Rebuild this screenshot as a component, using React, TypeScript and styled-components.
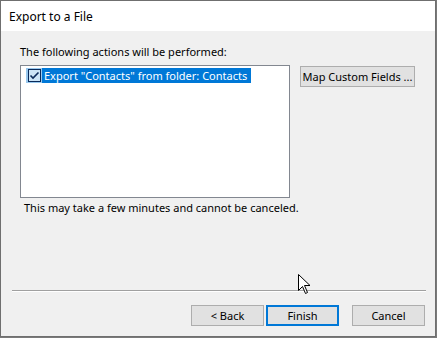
import React from 'react';
import styled, { createGlobalStyle } from 'styled-components';

const GlobalStyle = createGlobalStyle`
  html, body {
    margin: 0;
    padding: 0;
    background: #7a7a7a;
  }
  body {
    font-family: "Noto Sans", "Liberation Sans", sans-serif;
    font-size: 11px;
    color: #000;
  }
`;

const Window = styled.div`
  position: relative;
  box-sizing: border-box;
  width: 436px;
  height: 337px;
  border: 1px solid #6f6f6f;
  display: flex;
  flex-direction: column;
  background: #f0f0f0;
`;

const TitleBar = styled.div`
  height: 30px;
  background: #fff;
  display: flex;
  align-items: center;
  padding-left: 8px;
  font-size: 12px;
`;

const Body = styled.div`
  flex: 1;
  display: flex;
  flex-direction: column;
  padding: 13px 10px 0 19px;
`;

const Label = styled.div<{ indent?: number; top?: number }>`
  line-height: 16px;
  margin-left: ${(p) => p.indent || 0}px;
  margin-top: ${(p) => p.top || 0}px;
`;

const Row = styled.div`
  display: flex;
  align-items: flex-start;
  margin-top: 5px;
`;

const ListBox = styled.div`
  box-sizing: border-box;
  width: 270px;
  height: 133px;
  background: #fff;
  border: 1px solid #828790;
  padding: 2px 5px;
`;

const Item = styled.div`
  display: flex;
  height: 15px;
  align-items: stretch;
`;

const CheckCell = styled.div`
  width: 16px;
  background: #99c9ef;
  display: flex;
  align-items: center;
  justify-content: center;
`;

const ItemText = styled.div`
  background: #0078d7;
  color: #fff;
  padding: 0 4px 0 2px;
  line-height: 15px;
  white-space: nowrap;
`;

const Button = styled.button<{ primary?: boolean; w?: number }>`
  box-sizing: border-box;
  width: ${(p) => p.w || 73}px;
  height: 21px;
  padding: 0;
  font-family: inherit;
  font-size: 11px;
  color: #000;
  background: #e1e1e1;
  border: ${(p) => (p.primary ? '2px solid #0078d7' : '1px solid #adadad')};
  line-height: 16px;
  white-space: nowrap;
  flex-shrink: 0;
`;

const SideButton = styled(Button)`
  margin: 1px 0 0 10px;
`;

const CancelButton = styled(Button)`
  margin-left: 11px;
`;

const Separator = styled.div`
  margin: 74px 0 0 -8px;
  width: 414px;
  height: 1px;
  background: #a0a0a0;
  border-bottom: 1px solid #fff;
`;

const Footer = styled.div`
  display: flex;
  justify-content: flex-end;
  margin-top: 13px;
  gap: 2px;
`;

const Cursor = styled.svg`
  position: absolute;
  left: 297px;
  top: 273px;
`;

function CheckBox() {
  return (
    <svg width='13' height='13' viewBox='0 0 13 13'>
      <rect x='0.5' y='0.5' width='12' height='12' fill='#cce4f7' stroke='#0a2a5a' />
      <path d='M2.5 6.5 L5 9 L10.5 3.5' fill='none' stroke='#0a2a5a' strokeWidth='1.6' />
    </svg>
  );
}

export default function App() {
  return (
    <>
      <GlobalStyle />
      <Window>
        <TitleBar>Export to a File</TitleBar>
        <Body>
          <Label>The following actions will be performed:</Label>
          <Row>
            <ListBox>
              <Item>
                <CheckCell>
                  <CheckBox />
                </CheckCell>
                <ItemText>Export "Contacts" from folder: Contacts</ItemText>
              </Item>
            </ListBox>
            <SideButton w={115}>Map Custom Fields ...</SideButton>
          </Row>
          <Label indent={4} top={2}>
            This may take a few minutes and cannot be canceled.
          </Label>
          <Separator />
          <Footer>
            <Button>&lt; Back</Button>
            <Button primary>Finish</Button>
            <CancelButton>Cancel</CancelButton>
          </Footer>
        </Body>
        <Cursor width='13' height='21' viewBox='0 0 13 21'>
          <path
            d='M0.5 0.5 L0.5 16.5 L4.5 12.5 L7.5 19.5 L9.5 18.5 L6.5 11.5 L12 11.5 Z'
            fill='#fff'
            stroke='#000'
          />
        </Cursor>
      </Window>
    </>
  );
}
